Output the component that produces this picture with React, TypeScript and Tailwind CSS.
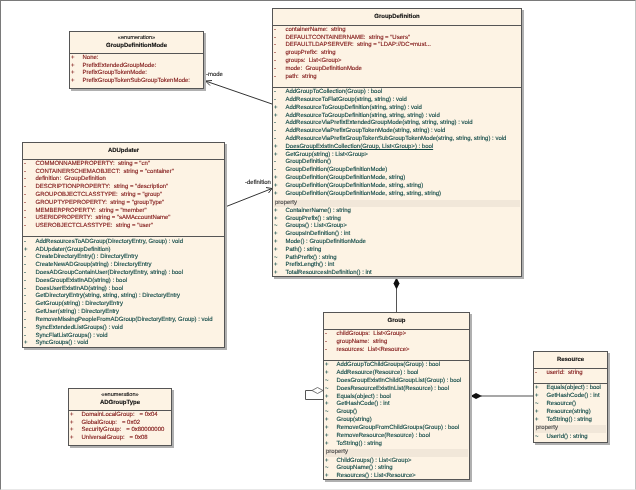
import React from "react";

type Row = [string, string, boolean?];

const attr = "text-[#7f1414]";
const meth = "text-[#0c4644]";

function Line({ r, color }: { r: Row; color: string }) {
  return (
    <div className={`flex h-[7.82px] leading-[7.82px] whitespace-pre ${color}`}>
      <span className="w-[11.5px] shrink-0">{r[0]}</span>
      <span className={r[2] ? "underline" : ""}>{r[1]}</span>
    </div>
  );
}

function Box({
  className,
  stereotype,
  name,
  headClass,
  attrs,
  methods,
  props,
}: {
  className: string;
  stereotype?: string;
  name: string;
  headClass: string;
  attrs: Row[];
  methods?: Row[];
  props?: Row[];
}) {
  return (
    <div
      className={`absolute bg-[#fdf3e4] border border-[#555] shadow-[2px_2px_0_#b0b0b0] text-[5.97px] ${className}`}
    >
      <div className={`flex flex-col items-center justify-center text-[#111] ${headClass}`}>
        {stereotype && <div className="text-[5.6px] leading-[7px] pt-[1px]">{stereotype}</div>}
        <div className="font-bold text-[5.97px] leading-[8px]">{name}</div>
      </div>
      <div className={`border-t border-[#555] pl-[1px] pt-[1.3px] ${methods ? "pb-[5.2px]" : ""}`}>
        {attrs.map((r) => (
          <Line key={r[1]} r={r} color={attr} />
        ))}
      </div>
      {methods && (
        <div className="border-t border-[#555] pt-[1.5px]">
          <div className="pl-[1px]">
            {methods.map((r) => (
              <Line key={r[1]} r={r} color={meth} />
            ))}
          </div>
          {props && (
            <>
              <div className="h-[7.8px] leading-[7.8px] mx-[1px] mt-[1px] mb-[0.4px] px-[1px] bg-[#f1e7d9] text-[#444]">
                property
              </div>
              <div className="pl-[1px]">
                {props.map((r) => (
                  <Line key={r[1]} r={r} color={meth} />
                ))}
              </div>
            </>
          )}
        </div>
      )}
    </div>
  );
}

const m = (s: string): Row => ["-", s];
const p = (s: string): Row => ["+", s];
const t = (s: string): Row => ["~", s];

export default function App() {
  return (
    <div className="relative w-[636px] h-[490px] bg-white overflow-hidden border-t border-l border-r border-b border-t-[#7a7a7a] border-l-[#7a7a7a] border-r-[#c4c4c4] border-b-[#e8e8e8] font-['Liberation_Sans',Arial,sans-serif] [text-rendering:geometricPrecision] [-webkit-text-stroke:0.12px]">
      <div className="absolute left-[-1px] top-[-1px] w-[636px] h-[490px] blur-[0.25px]">
        <svg className="absolute left-0 top-0" width="636" height="490" fill="none">
          <path d="M272 104 L205.5 81" stroke="#333" strokeWidth="1" />
          <path d="M212 80.5 L205.5 81 L210 85.5" stroke="#333" strokeWidth="1" />
          <path d="M225 207 L272 188.5" stroke="#333" strokeWidth="1" />
          <path d="M266 187.5 L272 188.5 L268.5 193" stroke="#333" strokeWidth="1" />
          <path d="M396.5 289 V312" stroke="#555" strokeWidth="1" />
          <path d="M396.5 277.5 L399.5 283.5 L396.5 289.5 L393.5 283.5 Z" fill="#111" />
          <path d="M312 390.5 H305.5 V399.5 H323" stroke="#555" strokeWidth="1" />
          <path d="M312 390.5 L317.5 387.5 L323 390.5 L317.5 393.5 Z" fill="#fff" stroke="#555" strokeWidth="0.8" />
          <path d="M481 396 H533" stroke="#8a8a8a" strokeWidth="1.6" />
          <path d="M470.5 396 L476 393 L482 396 L476 399 Z" fill="#111" />
        </svg>

        <div className="absolute left-[206px] top-[71px] text-[5.97px] leading-[8px] text-[#222]">-mode</div>
        <div className="absolute left-[245px] top-[179px] text-[5.97px] leading-[8px] text-[#222]">-definition</div>

        <Box
          className="left-[69px] top-[31px] w-[135px] h-[58px]"
          stereotype="«enumeration»"
          name="GroupDefinitionMode"
          headClass="h-[20.5px]"
          attrs={[p("None:"), p("PrefixExtendedGroupMode:"), p("PrefixGroupTokenMode:"), p("PrefixGroupTokenSubGroupTokenMode:")]}
        />

        <Box
          className="left-[22px] top-[142px] w-[203px] h-[206px]"
          name="ADUpdater"
          headClass="h-[15.5px]"
          attrs={[
            m('COMMONNAMEPROPERTY:  string = "cn"'),
            m('CONTAINERSCHEMAOBJECT:  string = "container"'),
            m("definition:  GroupDefinition"),
            m('DESCRIPTIONPROPERTY:  string = "description"'),
            m('GROUPOBJECTCLASSTYPE:  string = "group"'),
            m('GROUPTYPEPROPERTY:  string = "groupType"'),
            m('MEMBERPROPERTY:  string = "member"'),
            m('USERIDPROPERTY:  string = "sAMAccountName"'),
            m('USEROBJECTCLASSTYPE:  string = "user"'),
          ]}
          methods={[
            m("AddResourcesToADGroup(DirectoryEntry, Group) : void"),
            p("ADUpdater(GroupDefinition)"),
            m("CreateDirectoryEntry() : DirectoryEntry"),
            m("CreateNewADGroup(string) : DirectoryEntry"),
            m("DoesADGroupContainUser(DirectoryEntry, string) : bool"),
            m("DoesGroupExistInAD(string) : bool"),
            m("DoesUserExistInAD(string) : bool"),
            m("GetDirectoryEntry(string, string, string) : DirectoryEntry"),
            m("GetGroup(string) : DirectoryEntry"),
            m("GetUser(string) : DirectoryEntry"),
            m("RemoveMissingPeopleFromADGroup(DirectoryEntry, Group) : void"),
            m("SyncExtendedListGroups() : void"),
            m("SyncFlatListGroups() : void"),
            p("SyncGroups() : void"),
          ]}
        />

        <Box
          className="left-[68px] top-[388px] w-[104px] h-[58px]"
          stereotype="«enumeration»"
          name="ADGroupType"
          headClass="h-[20.5px]"
          attrs={[p("DomainLocalGroup:   = 0x04"), p("GlobalGroup:   = 0x02"), p("SecurityGroup:   = 0x80000000"), p("UniversalGroup:   = 0x08")]}
        />

        <Box
          className="left-[272px] top-[8px] w-[250px] h-[269px]"
          name="GroupDefinition"
          headClass="h-[15.5px]"
          attrs={[
            m("containerName:  string"),
            m('DEFAULTCONTAINERNAME:  string = "Users"'),
            m('DEFAULTLDAPSERVER:  string = "LDAP://DC=must...'),
            m("groupPrefix:  string"),
            m("groups:  List<Group>"),
            m("mode:  GroupDefinitionMode"),
            m("path:  string"),
          ]}
          methods={[
            m("AddGroupToCollection(Group) : bool"),
            m("AddResourceToFlatGroup(string, string) : void"),
            p("AddResourceToGroupDefinition(string, string) : void"),
            p("AddResourceToGroupDefinition(string, string, string) : void"),
            m("AddResourceViaPrefixExtendedGroupMode(string, string, string) : void"),
            m("AddResourceViaPrefixGroupTokenMode(string, string) : void"),
            m("AddResourceViaPrefixGroupTokenSubGroupTokenMode(string, string, string) : void"),
            ["+", "DoesGroupExistInCollection(Group, List<Group>) : bool", true],
            p("GetGroup(string) : List<Group>"),
            m("GroupDefinition()"),
            m("GroupDefinition(GroupDefinitionMode)"),
            p("GroupDefinition(GroupDefinitionMode, string)"),
            p("GroupDefinition(GroupDefinitionMode, string, string)"),
            p("GroupDefinition(GroupDefinitionMode, string, string, string)"),
          ]}
          props={[
            p("ContainerName() : string"),
            p("GroupPrefix() : string"),
            t("Groups() : List<Group>"),
            p("GroupsInDefinition() : int"),
            p("Mode() : GroupDefinitionMode"),
            p("Path() : string"),
            t("PathPrefix() : string"),
            p("PrefixLength() : int"),
            p("TotalResourcesInDefinition() : int"),
          ]}
        />

        <Box
          className="left-[323px] top-[312px] w-[147px] h-[168px]"
          name="Group"
          headClass="h-[16px]"
          attrs={[m("childGroups:  List<Group>"), m("groupName:  string"), m("resources:  List<Resource>")]}
          methods={[
            p("AddGroupToChildGroups(Group) : bool"),
            p("AddResource(Resource) : bool"),
            t("DoesGroupExistInChildGroupList(Group) : bool"),
            t("DoesResourceExistInList(Resource) : bool"),
            p("Equals(object) : bool"),
            p("GetHashCode() : int"),
            t("Group()"),
            p("Group(string)"),
            p("RemoveGroupFromChildGroups(Group) : bool"),
            p("RemoveResource(Resource) : bool"),
            p("ToString() : string"),
          ]}
          props={[p("ChildGroups() : List<Group>"), t("GroupName() : string"), p("Resources() : List<Resource>")]}
        />

        <Box
          className="left-[533px] top-[351px] w-[75px] h-[92px]"
          name="Resource"
          headClass="h-[15.5px]"
          attrs={[m("userId:  string")]}
          methods={[
            p("Equals(object) : bool"),
            p("GetHashCode() : int"),
            t("Resource()"),
            p("Resource(string)"),
            p("ToString() : string"),
          ]}
          props={[t("UserId() : string")]}
        />
      </div>
    </div>
  );
}
